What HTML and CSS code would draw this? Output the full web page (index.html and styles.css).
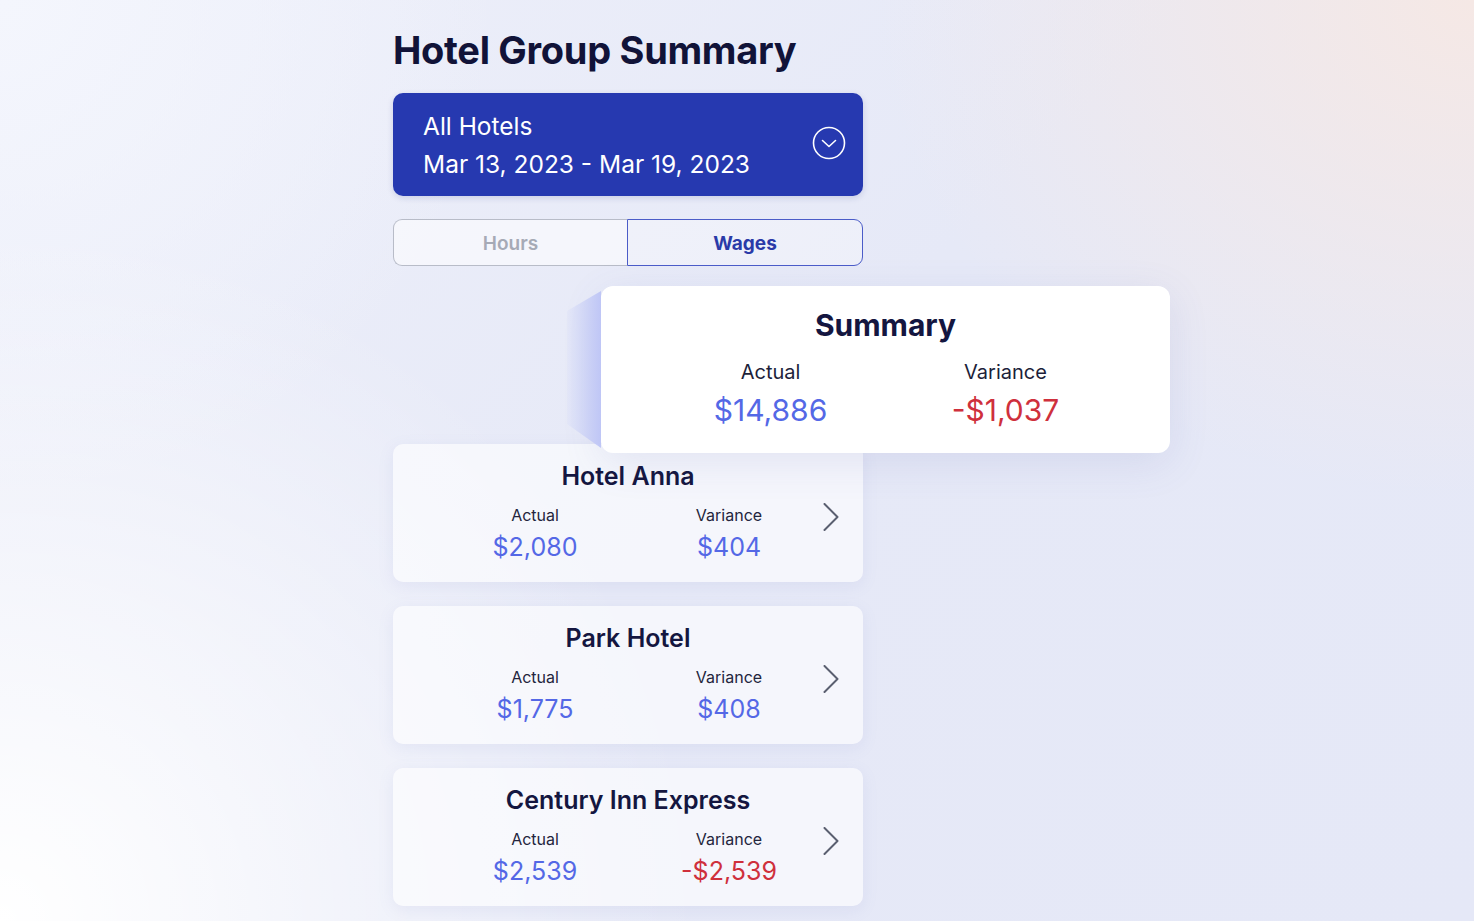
FILE: index.html
```html
<!DOCTYPE html>
<html>
<head>
<meta charset="utf-8">
<link rel="stylesheet" href="styles.css">
</head>
<body>
<div class="page">
  <main class="column">
    <h1 class="title">Hotel Group Summary</h1>
    <div class="selector">
      <div class="selector-text">
        <div class="sel-line">All Hotels</div>
        <div class="sel-line">Mar 13, 2023 - Mar 19, 2023</div>
      </div>
      <svg class="sel-icon" width="34" height="34" viewBox="0 0 34 34">
        <circle cx="17" cy="17" r="15.5" fill="none" stroke="#ffffff" stroke-width="1.6"/>
        <path d="M10.5 14.5 L17 20.5 L23.5 14.5" fill="none" stroke="#ffffff" stroke-width="1.6" stroke-linecap="round" stroke-linejoin="round"/>
      </svg>
    </div>
    <div class="toggle">
      <div class="tab tab-off">Hours</div>
      <div class="tab tab-on">Wages</div>
    </div>
    <div class="summary-wrap">
      <div class="summary-tail"></div>
      <section class="summary">
        <h2 class="summary-title">Summary</h2>
        <div class="summary-cols">
          <div class="scol">
            <div class="slabel">Actual</div>
            <div class="svalue blue">$14,886</div>
          </div>
          <div class="scol">
            <div class="slabel">Variance</div>
            <div class="svalue red">-$1,037</div>
          </div>
        </div>
      </section>
    </div>
    <div class="hotels">
      <div class="hotel">
        <h3 class="hname">Hotel Anna</h3>
        <div class="hrow">
          <div class="hcol"><div class="hlabel">Actual</div><div class="hvalue blue">$2,080</div></div>
          <div class="hcol"><div class="hlabel">Variance</div><div class="hvalue blue">$404</div></div>
          <svg class="chev" width="16" height="28" viewBox="0 0 16 28"><path d="M1.5 1 L14.5 14 L1.5 27" fill="none" stroke="#5a5f70" stroke-width="2" stroke-linecap="round" stroke-linejoin="round"/></svg>
        </div>
      </div>
      <div class="hotel">
        <h3 class="hname">Park Hotel</h3>
        <div class="hrow">
          <div class="hcol"><div class="hlabel">Actual</div><div class="hvalue blue">$1,775</div></div>
          <div class="hcol"><div class="hlabel">Variance</div><div class="hvalue blue">$408</div></div>
          <svg class="chev" width="16" height="28" viewBox="0 0 16 28"><path d="M1.5 1 L14.5 14 L1.5 27" fill="none" stroke="#5a5f70" stroke-width="2" stroke-linecap="round" stroke-linejoin="round"/></svg>
        </div>
      </div>
      <div class="hotel">
        <h3 class="hname">Century Inn Express</h3>
        <div class="hrow">
          <div class="hcol"><div class="hlabel">Actual</div><div class="hvalue blue">$2,539</div></div>
          <div class="hcol"><div class="hlabel">Variance</div><div class="hvalue red">-$2,539</div></div>
          <svg class="chev" width="16" height="28" viewBox="0 0 16 28"><path d="M1.5 1 L14.5 14 L1.5 27" fill="none" stroke="#5a5f70" stroke-width="2" stroke-linecap="round" stroke-linejoin="round"/></svg>
        </div>
      </div>
    </div>
  </main>
</div>
</body>
</html>
```

FILE: styles.css
```css
* { box-sizing: border-box; }
html, body { margin: 0; padding: 0; }
body {
  width: 1474px;
  height: 921px;
  overflow: hidden;
  font-family: Inter, "Noto Sans", sans-serif;
  color: #15173d;
  background:
    radial-gradient(ellipse 600px 500px at 1474px 0px, rgba(246, 232, 228, 0.95), rgba(246, 232, 228, 0) 100%),
    radial-gradient(ellipse 700px 700px at 0px 921px, rgba(255, 255, 255, 1), rgba(255, 255, 255, 0) 100%),
    radial-gradient(ellipse 500px 500px at 0px 0px, rgba(244, 246, 253, 1), rgba(244, 246, 253, 0) 100%),
    linear-gradient(135deg, #eef0fa 0%, #e6e9f7 50%, #e5e8f7 100%);
}
.page { padding-top: 27px; padding-left: 393px; }
.column { width: 470px; display: flex; flex-direction: column; }
.title {
  margin: 0;
  font-size: 38px;
  line-height: 46px;
  font-weight: 700;
  letter-spacing: -0.3px;
  color: #111338;
}
.selector {
  margin-top: 20px;
  height: 103px;
  background: #2639b0;
  border-radius: 10px;
  display: flex;
  align-items: center;
  justify-content: space-between;
  padding: 0 17px 0 30px;
  box-shadow: 0 2px 6px rgba(30, 40, 120, 0.15);
}
.selector-text { display: flex; flex-direction: column; gap: 4px; padding-top: 0px; }
.sel-line { color: #ffffff; font-size: 24.5px; line-height: 34px; font-weight: 400; }
.sel-icon { display: block; margin-top: -4px; }
.toggle {
  margin-top: 23px;
  height: 47px;
  display: grid;
  grid-template-columns: 234px 1fr;
}
.tab {
  display: flex;
  align-items: center;
  justify-content: center;
  font-size: 19px;
  font-weight: 600;
  padding-top: 2px;
}
.tab-off {
  color: #a6aab6;
  border: 1px solid #b8bcc8;
  border-right: none;
  border-radius: 9px 0 0 9px;
  background: rgba(255, 255, 255, 0.55);
}
.tab-on {
  color: #2a3aa8;
  font-weight: 700;
  border: 1.5px solid #4b5cc8;
  border-radius: 0 9px 9px 0;
  background: rgba(255, 255, 255, 0.3);
}
.summary-wrap {
  margin-top: 20px;
  margin-left: 174px;
  margin-bottom: -9px;
  align-self: flex-start;
  display: flex;
  position: relative;
  z-index: 2;
}
.summary-tail {
  flex: none;
  width: 34px;
  height: 167px;
  background: linear-gradient(90deg, rgba(196, 203, 246, 0.1) 0%, rgba(196, 203, 246, 0.6) 50%, #bfc6f6 100%);
  clip-path: polygon(0 25px, 100% 5px, 100% 162px, 0 138px);
}
.summary {
  flex: none;
  width: 569px;
  height: 167px;
  background: #ffffff;
  border-radius: 12px;
  box-shadow: 0 10px 40px rgba(90, 100, 170, 0.12);
  padding-top: 19px;
  display: flex;
  flex-direction: column;
  align-items: center;
}
.summary-title {
  margin: 0;
  font-size: 30px;
  line-height: 40px;
  font-weight: 700;
  color: #141640;
}
.summary-cols {
  margin-top: 14px;
  width: 100%;
  display: grid;
  grid-template-columns: 235px 235px;
  padding: 0 0 0 52px;
}
.scol { display: flex; flex-direction: column; align-items: center; }
.slabel { font-size: 20px; line-height: 26px; color: #1d1f3a; }
.svalue { font-size: 30px; line-height: 40px; margin-top: 5px; }
.blue { color: #5468e6; }
.red { color: #cf303c; }
.hotels { display: flex; flex-direction: column; gap: 24px; }
.hotel {
  height: 138px;
  background: rgba(255, 255, 255, 0.6);
  border-radius: 10px;
  box-shadow: 0 4px 16px rgba(120, 130, 200, 0.1);
  padding-top: 16px;
  display: flex;
  flex-direction: column;
  align-items: center;
  position: relative;
  z-index: 1;
}
.hname {
  margin: 0;
  font-size: 25px;
  line-height: 32px;
  font-weight: 600;
  color: #141640;
}
.hrow {
  margin-top: 12px;
  width: 100%;
  display: grid;
  grid-template-columns: 194px 194px 16px;
  align-items: center;
  padding: 0 0 0 45px;
}
.hcol { display: flex; flex-direction: column; align-items: center; }
.hlabel { font-size: 16px; line-height: 22px; color: #23253d; }
.hvalue { font-size: 25px; line-height: 32px; margin-top: 5px; }
.chev { display: block; margin-left: -3px; margin-top: -34px; }
```
